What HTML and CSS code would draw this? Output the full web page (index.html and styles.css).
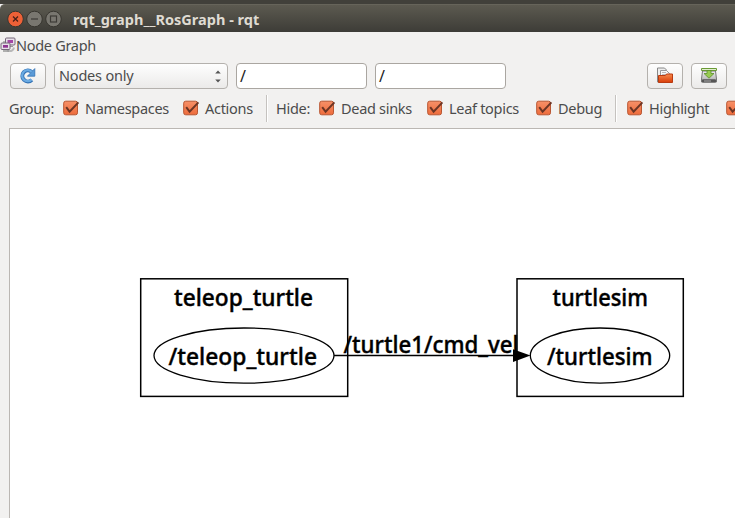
FILE: index.html
```
<!DOCTYPE html>
<html lang="en">
<head>
<meta charset="utf-8">
<title>rqt_graph__RosGraph - rqt</title>
<link rel="stylesheet" href="styles.css">
</head>
<body>
<svg class="defs" width="0" height="0">
  <defs>
    <linearGradient id="orange" x1="0" y1="0" x2="0" y2="1"><stop offset="0" stop-color="#f79068"/><stop offset="1" stop-color="#ee6c3c"/></linearGradient>
    <linearGradient id="folder" x1="0" y1="0" x2="0" y2="1"><stop offset="0" stop-color="#f68a4c"/><stop offset="1" stop-color="#d83c08"/></linearGradient>
    <linearGradient id="metal" x1="0" y1="0" x2="0" y2="1"><stop offset="0" stop-color="#eee"/><stop offset="1" stop-color="#aaa"/></linearGradient>
    <symbol id="check" viewBox="0 0 17 16">
      <rect x=".7" y="1.2" width="13.8" height="13.6" rx="2" fill="url(#orange)" stroke="#b85632"/>
      <path d="M3.2 7.2 6.6 11.6 15.4 2.4" fill="none" stroke="#6c3524" stroke-width="2"/>
    </symbol>
  </defs>
</svg>
<div class="desktop-strip"></div>
<header class="titlebar">
  <svg class="controls" width="58" height="18" viewBox="0 0 58 18">
    <circle cx="9.5" cy="9" r="7.8" fill="#ee6137" stroke="#383630"/>
    <path d="M7 6.5l5 5M12 6.5l-5 5" stroke="#492018" stroke-width="1.3"/>
    <circle cx="28.5" cy="9" r="7.8" fill="#797770" stroke="#383630"/>
    <path d="M25 9h7" stroke="#3d3b36" stroke-width="1.2"/>
    <circle cx="47.5" cy="9" r="7.8" fill="#797770" stroke="#383630"/>
    <rect x="44.5" y="6" width="6" height="6" fill="none" stroke="#3d3b36" stroke-width="1.2"/>
  </svg>
  <h1>rqt_graph__RosGraph - rqt</h1>
</header>
<div class="dock">
  <svg width="16" height="16" viewBox="0 0 16 16">
    <path d="M7 13.5q6 2 7-3M4 4v4" fill="none" stroke="#b8b8b8" stroke-width="2"/>
    <rect x="5.5" y="1" width="9.5" height="7" rx="1" fill="#e7dfe9" stroke="#77687a"/>
    <rect x="7.5" y="3" width="5.5" height="3" fill="#a347a5"/>
    <path d="M8 9.5h5" stroke="#999"/>
    <rect x="1" y="6" width="9" height="6.5" rx="1" fill="#e7dfe9" stroke="#77687a"/>
    <rect x="3" y="8" width="5" height="2.7" fill="#8f3492"/>
    <path d="M3 14h6" stroke="#999" stroke-width="1.5"/>
  </svg>
  <span>Node Graph</span>
</div>
<div class="toolbar">
  <button class="btn" aria-label="Refresh">
    <svg width="18" height="18" viewBox="0 0 18 18">
      <path d="M12.8 12.8A5.5 5.5 0 1 1 12.6 4.9" fill="none" stroke="#3472b4" stroke-width="4"/>
      <path d="M15.8 1.6v7.6H8.4z" fill="#5a9bd8" stroke="#3472b4" stroke-width=".8"/>
      <path d="M12.5 12.6A5.5 5.5 0 1 1 12.6 4.9" fill="none" stroke="#6aaae2" stroke-width="2.3"/>
    </svg>
  </button>
  <div class="combo"><span>Nodes only</span>
    <svg width="8" height="14" viewBox="0 0 8 14"><path d="M1.2 4.5 4 1.5l2.8 3zM1.2 10.5l2.8 3 2.8-3z" fill="#555"/></svg>
  </div>
  <div class="field">/</div>
  <div class="field">/</div>
  <button class="btn open" aria-label="Open">
    <svg width="18" height="18" viewBox="0 0 18 18">
      <path d="M1.5 1h7l2 2v12h-9z" fill="#eee" stroke="#888"/>
      <path d="M4.5 3.5h6l3 3V14h-9z" fill="#f7f7f7" stroke="#999"/>
      <path d="M6 5.5h4M6 7.5h5" stroke="#bbb"/>
      <path d="M2.5 8.5h7l1-1.5h6v8.5h-14z" fill="url(#folder)" stroke="#b93a10"/>
    </svg>
  </button>
  <button class="btn" aria-label="Save">
    <svg width="18" height="18" viewBox="0 0 18 18">
      <path d="M2.5 4h13l1 8v3h-15v-3z" fill="url(#metal)" stroke="#777"/>
      <rect x="2" y="12.3" width="14" height="3.2" rx="1" fill="#555"/>
      <path d="M4 14h7" stroke="#aaa"/>
      <path d="M1.5 1.5h15v2h-15z" fill="#e2efcf" stroke="#6a9a35"/>
      <path d="M7 3.5h4v3h3L9 11.2 4 6.5h3z" fill="#98cb52" stroke="#5c8f29" stroke-width=".8"/>
    </svg>
  </button>
</div>
<div class="options">
  <span class="caption group">Group:</span>
  <label class="opt w120"><svg width="17" height="16"><use href="#check"/></svg><span>Namespaces</span></label>
  <label class="opt w83"><svg width="17" height="16"><use href="#check"/></svg><span>Actions</span></label>
  <i class="sep"></i>
  <span class="caption hide">Hide:</span>
  <label class="opt w108"><svg width="17" height="16"><use href="#check"/></svg><span>Dead sinks</span></label>
  <label class="opt w109"><svg width="17" height="16"><use href="#check"/></svg><span>Leaf topics</span></label>
  <label class="opt w79"><svg width="17" height="16"><use href="#check"/></svg><span>Debug</span></label>
  <i class="sep last"></i>
  <label class="opt w99"><svg width="17" height="16"><use href="#check"/></svg><span>Highlight</span></label>
  <label class="opt"><svg width="17" height="16"><use href="#check"/></svg></label>
</div>
<main class="canvas">
  <svg width="725" height="389" viewBox="10 129 725 389">
    <g fill="none" stroke="#000" stroke-width="1.5">
      <rect x="140.7" y="278.8" width="207" height="117.6"/>
      <rect x="517" y="278.8" width="166.3" height="117.6"/>
      <ellipse cx="244" cy="355.6" rx="90" ry="27.6" stroke-width="1.3"/>
      <ellipse cx="600" cy="355.6" rx="69.7" ry="27.6" stroke-width="1.3"/>
      <path d="M334 355.6H514"/>
    </g>
    <path d="M513 349.2 530.5 355.6 513 362z"/>
    <g class="node-text">
      <text x="174" y="305.5" textLength="139" lengthAdjust="spacingAndGlyphs">teleop_turtle</text>
      <text x="168.5" y="364.5" textLength="148.5" lengthAdjust="spacingAndGlyphs">/teleop_turtle</text>
      <text x="343.5" y="352.5" textLength="175" lengthAdjust="spacingAndGlyphs">/turtle1/cmd_vel</text>
      <text x="552.5" y="305.5" textLength="95.5" lengthAdjust="spacingAndGlyphs">turtlesim</text>
      <text x="547" y="364.5" textLength="105.5" lengthAdjust="spacingAndGlyphs">/turtlesim</text>
    </g>
  </svg>
</main>
</body>
</html>
```
FILE: styles.css
```
* { box-sizing: border-box; }
body {
  margin: 0;
  width: 735px;
  height: 518px;
  overflow: hidden;
  display: flex;
  flex-direction: column;
  background: #f2f1f0;
  color: #4c4c4c;
  font: 14.5px/20px "Noto Sans", sans-serif;
  white-space: nowrap;
}
svg { display: block; flex: none; }
.defs { position: absolute; }
.desktop-strip { height: 4px; flex: none; background: #41403a; }
.titlebar {
  height: 28px;
  flex: none;
  display: flex;
  align-items: center;
  gap: 9px;
  padding-left: 6px;
  background: linear-gradient(#5c5a50, #3d3c37);
  border-top: 1px solid #66645a;
  border-top-left-radius: 5px;
}
.titlebar h1 {
  margin: 0;
  color: #dfdbd2;
  font-size: 14.5px;
  font-weight: 700;
  letter-spacing: 0.02px;
}
.dock { height: 25px; flex: none; display: flex; align-items: center; padding-bottom: 0; }
.dock span { letter-spacing: -0.3px; }
.toolbar { height: 37px; flex: none; display: flex; align-items: center; gap: 8px; padding: 0 8px 0 10px; }
.btn, .combo, .field {
  height: 26px;
  border: 1px solid #b4b1ad;
  border-radius: 4px;
}
.btn {
  width: 36px;
  padding: 0;
  display: flex;
  align-items: center;
  justify-content: center;
  background: linear-gradient(#fefefe, #ebeae9);
}
.open { margin-left: auto; }
.combo {
  width: 174px;
  display: flex;
  align-items: center;
  justify-content: space-between;
  padding: 0 5px 0 4px;
  background: linear-gradient(#fefefe, #ebeae9);
  letter-spacing: -0.2px;
}
.combo span { padding-bottom: 1px; }
.field { width: 131px; padding: 2px 3px; background: #fff; border-color: #aaa6a1; color: #222; font-size: 16px; }
.options {
  height: 34px;
  flex: none;
  display: flex;
  align-items: center;
  padding: 0 0 6px 9px;
  overflow: hidden;
  letter-spacing: -0.3px;
}
.options span { padding-bottom: 1px; }
.group { width: 54px; }
.hide { width: 43px; }
.opt { display: flex; align-items: center; gap: 5px; flex: none; }
.caption { flex: none; }
.w120 { width: 120px; }
.w108 { width: 108px; }
.w109 { width: 109px; }
.w99 { width: 99px; }
.w83 { width: 83px; }
.w79 { width: 79px; }
.sep { width: 2px; height: 27px; flex: none; margin-right: 8px; background: #c5c2bf; border-right: 1px solid #fff; }
.sep.last { margin-right: 10px; }
.canvas { flex: 1; margin-left: 9px; background: #fff; border: solid #bbb7b3; border-width: 1px 0 0 1px; overflow: hidden; }
.node-text { font: 500 23px "Noto Sans", sans-serif; fill: #000; stroke: #000; stroke-width: .4px; }
```
